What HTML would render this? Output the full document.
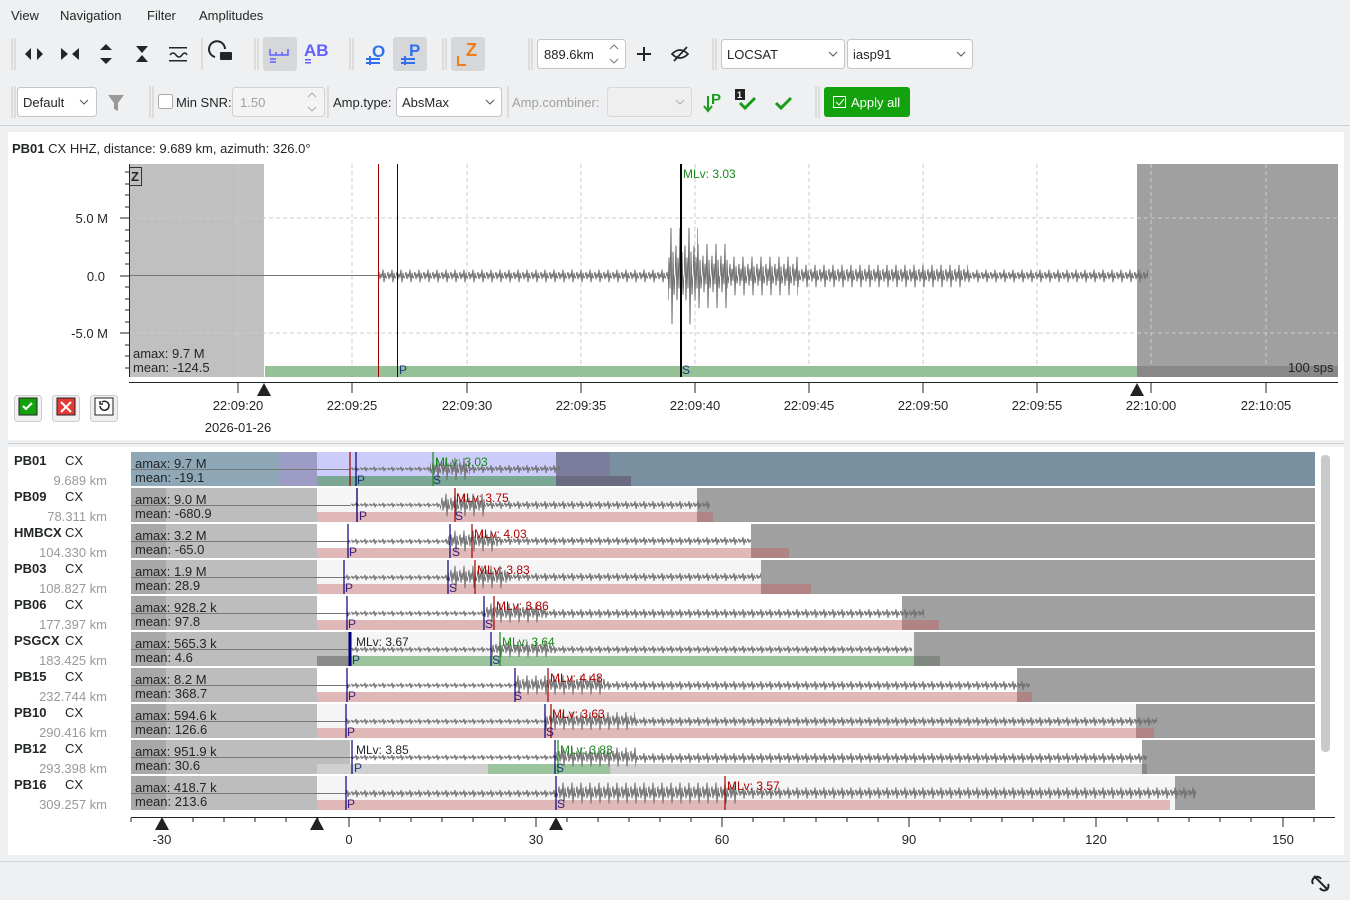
<!DOCTYPE html>
<html><head><meta charset="utf-8"><style>
html,body{margin:0;padding:0;width:1350px;height:900px;overflow:hidden;background:#eff0f1;font-family:"Liberation Sans","DejaVu Sans",sans-serif}
svg{display:block}
text{font-family:"Liberation Sans","DejaVu Sans",sans-serif;font-size:13px;fill:#232627}
.s{font-size:12px}
</style></head><body>
<svg width="1350" height="900" viewBox="0 0 1350 900" xmlns="http://www.w3.org/2000/svg">
<defs>
<pattern id="z" width="9" height="20" patternUnits="userSpaceOnUse">
<path d="M0 10 L1 5 L2 14 L3 7 L4 12 L5 2 L6 18 L7 6 L8 13 L9 10" stroke="#707070" stroke-width="1" fill="none" vector-effect="non-scaling-stroke"/>
</pattern>
</defs>
<!-- menu -->
<text x="11" y="20">View</text><text x="60" y="20">Navigation</text><text x="147" y="20">Filter</text><text x="199" y="20">Amplitudes</text>
<!-- toolbar row1 -->
<g fill="#232627">
<path d="M25 54 l6 -6 v12z M43 54 l-6 -6 v12z"/>
<path d="M61 48 l7 6 l-7 6z M79 48 l-7 6 l7 6z"/>
<path d="M106 44 l-6 6 h12z M106 64 l-6 -6 h12z"/>
<path d="M136 46 h12 l-6 7z M136 62 h12 l-6 -7z"/>
<rect x="169" y="47" width="18" height="1.5"/><rect x="169" y="60" width="18" height="1.5"/>
<path d="M170 55 q3 -4 6 0 t6 0 t5 0" stroke="#232627" fill="none" stroke-width="1.5"/>
<path d="M215 57 a8 8 0 1 1 10 -8" stroke="#232627" fill="none" stroke-width="2"/><rect x="220" y="52" width="12" height="8" rx="1"/>
</g>
<rect x="263" y="37" width="34" height="34" rx="3" fill="#d6d7d9"/>
<path d="M270 49 v6 h18 v-6 M276 52v3 M282 52v3 M270 59h6 M270 62h6" stroke="#6060ff" fill="none" stroke-width="1.5"/>
<text x="304" y="56" style="font-size:17px;font-weight:bold;fill:#6060ff">AB</text>
<rect x="305" y="59" width="6" height="1.5" fill="#6060ff"/><rect x="305" y="62" width="6" height="1.5" fill="#6060ff"/>
<text x="372" y="57" style="font-size:17px;font-weight:bold;fill:#3070f0">O</text>
<path d="M366 59h14 M366 63h14 M370 56v9" stroke="#3070f0" stroke-width="2"/>
<rect x="393" y="37" width="34" height="34" rx="3" fill="#d6d7d9"/>
<text x="409" y="56" style="font-size:17px;font-weight:bold;fill:#3070f0">P</text>
<path d="M401 59h14 M401 63h14 M405 56v9" stroke="#3070f0" stroke-width="2"/>
<rect x="451" y="37" width="34" height="34" rx="3" fill="#d6d7d9"/>
<text x="466" y="56" style="font-size:18px;font-weight:bold;fill:#f47a12">Z</text>
<path d="M458 56v9h8" stroke="#f47a12" stroke-width="2" fill="none"/>
<g stroke="#c8c8c8"><path d="M12 38v32 M15 38v32 M202 38v32 M255 38v32 M258 38v32 M350 38v32 M353 38v32 M443 38v32 M446 38v32 M529 38v32 M532 38v32 M713 38v32 M716 38v32 M12 86v32 M15 86v32 M150 86v32 M153 86v32 M328 86v32 M508 86v32 M816 86v32 M819 86v32"/></g>
<rect x="537.5" y="39.5" width="88" height="29" rx="3" fill="#fff" stroke="#c4c6c9"/>
<text x="544" y="59">889.6km</text>
<path d="M610 49l4-4 4 4 M610 59l4 4 4-4" stroke="#777" fill="none"/>
<path d="M644 47v14 M637 54h14" stroke="#232627" stroke-width="2"/>
<path d="M672 54 q8 -8 16 0 q-8 8 -16 0z M674 61 l13 -14" stroke="#232627" stroke-width="1.7" fill="none"/>
<rect x="721.5" y="39.5" width="123" height="29" rx="3" fill="#fff" stroke="#c4c6c9"/>
<text x="727" y="59">LOCSAT</text><path d="M829 52l4 4 4-4" stroke="#555" fill="none"/>
<rect x="847.5" y="39.5" width="125" height="29" rx="3" fill="#fff" stroke="#c4c6c9"/>
<text x="853" y="59">iasp91</text><path d="M957 52l4 4 4-4" stroke="#555" fill="none"/>
<!-- row2 -->
<rect x="17.5" y="87.5" width="79" height="29" rx="3" fill="#fff" stroke="#c4c6c9"/>
<text x="23" y="107">Default</text><path d="M80 100l4 4 4-4" stroke="#555" fill="none"/>
<path d="M108 95h16l-6 8v8l-4-2v-6z" fill="#999"/>
<rect x="158.5" y="94.5" width="14" height="14" rx="2" fill="#fff" stroke="#aaa"/>
<text x="176" y="107">Min SNR:</text>
<rect x="232.5" y="87.5" width="92" height="29" rx="3" fill="#f4f4f5" stroke="#d0d2d4"/>
<text x="240" y="107" style="fill:#a0a0a0">1.50</text>
<path d="M308 97l4-4 4 4 M308 107l4 4 4-4" stroke="#aaa" fill="none"/>
<text x="333" y="107">Amp.type:</text>
<rect x="396.5" y="87.5" width="105" height="29" rx="3" fill="#fff" stroke="#c4c6c9"/>
<text x="402" y="107">AbsMax</text><path d="M486 100l4 4 4-4" stroke="#555" fill="none"/>
<text x="512" y="107" style="fill:#a0a0a0">Amp.combiner:</text>
<rect x="607.5" y="87.5" width="84" height="29" rx="3" fill="#efeff0" stroke="#d6d8da"/>
<path d="M676 100l4 4 4-4" stroke="#aaa" fill="none"/>
<path d="M708 96v14 M704 106l4 5 4-5" stroke="#1a9c1a" stroke-width="2" fill="none"/>
<text x="711" y="104" style="font-size:15px;font-weight:bold;fill:#1a9c1a">P</text>
<rect x="735" y="89" width="10" height="11" fill="#222"/><text x="737" y="98" style="font-size:9px;fill:#fff;font-weight:bold">1</text>
<path d="M740 103l5 5 10-10 M776 103l5 5 10-10" stroke="#1a9c1a" stroke-width="3" fill="none"/>
<rect x="824" y="87" width="86" height="30" rx="3" fill="#13a10e"/>
<rect x="833.5" y="96.5" width="12" height="11" fill="none" stroke="#fff"/><path d="M836 102l3 3 5-6" stroke="#fff" fill="none"/>
<text x="851" y="107" style="fill:#fff">Apply all</text>
<line x1="0" y1="125.5" x2="1350" y2="125.5" stroke="#cfd0d2"/>
<!-- top panel -->
<rect x="8" y="132" width="1336" height="308" fill="#fff"/>
<text x="12" y="153"><tspan font-weight="bold">PB01</tspan>  CX  HHZ, distance: 9.689 km, azimuth: 326.0°</text>
<rect x="129" y="164" width="135" height="213" fill="#c0c0c0"/>
<rect x="1137" y="164" width="201" height="213" fill="#a0a0a0"/>
<g stroke="#ccc" stroke-dasharray="4,3"><path d="M129 218H1338 M129 333H1338 M238 164V377 M352 164V377 M467 164V377 M581 164V377 M695 164V377 M809 164V377 M923 164V377 M1037 164V377 M1151 164V377 M1266 164V377"/></g>
<rect x="265" y="366" width="872" height="11" fill="#96c096"/>
<rect x="1137" y="366" width="201" height="11" fill="#888"/>
<line x1="129" y1="275.5" x2="378" y2="275.5" stroke="#777"/>
<g transform="translate(0,268) scale(1,0.8)"><rect x="378" y="0" width="290" height="20" fill="url(#z)"/></g>
<g transform="translate(0,216) scale(1,6)"><rect x="668" y="0" width="30" height="20" fill="url(#z)"/></g>
<g transform="translate(0,236) scale(1,4)"><rect x="698" y="0" width="30" height="20" fill="url(#z)"/></g>
<g transform="translate(0,252) scale(1,2.4)"><rect x="728" y="0" width="70" height="20" fill="url(#z)"/></g>
<g transform="translate(0,262) scale(1,1.4)"><rect x="798" y="0" width="170" height="20" fill="url(#z)"/></g>
<g transform="translate(0,268) scale(1,0.8)"><rect x="968" y="0" width="180" height="20" fill="url(#z)"/></g>
<line x1="378.5" y1="164" x2="378.5" y2="377" stroke="#a00000"/>
<line x1="397.5" y1="164" x2="397.5" y2="377" stroke="#000080"/>
<line x1="681" y1="164" x2="681" y2="377" stroke="#000" stroke-width="2"/>
<text x="399" y="374" class="s" style="fill:#1a3a7a">P</text><text x="682" y="374" class="s" style="fill:#1a3a7a">S</text>
<text x="683" y="178" class="s" style="fill:#1a8a1a">MLv: 3.03</text>
<rect x="129.5" y="167.5" width="12" height="18" fill="none" stroke="#333"/><text x="131" y="181" style="font-weight:bold">Z</text>
<text x="133" y="358">amax: 9.7 M</text><text x="133" y="372">mean: -124.5</text>
<text x="1288" y="372">100 sps</text>
<line x1="129.5" y1="164" x2="129.5" y2="377" stroke="#232627"/>
<g stroke="#232627"><path d="M120 218h9 M120 276h9 M120 333h9 M125 172h4 M125 184h4 M125 195h4 M125 207h4 M125 230h4 M125 241h4 M125 253h4 M125 264h4 M125 287h4 M125 299h4 M125 310h4 M125 322h4 M125 345h4 M125 356h4 M125 368h4"/></g>
<text x="108" y="223" text-anchor="end">5.0 M</text><text x="105" y="281" text-anchor="end">0.0</text><text x="108" y="338" text-anchor="end">-5.0 M</text>
<line x1="129" y1="382.5" x2="1338" y2="382.5" stroke="#232627"/>
<g stroke="#232627"><path d="M238 383v10 M352 383v10 M467 383v10 M581 383v10 M695 383v10 M809 383v10 M923 383v10 M1037 383v10 M1151 383v10 M1266 383v10"/></g>
<g text-anchor="middle"><text x="238" y="410">22:09:20</text><text x="352" y="410">22:09:25</text><text x="467" y="410">22:09:30</text><text x="581" y="410">22:09:35</text><text x="695" y="410">22:09:40</text><text x="809" y="410">22:09:45</text><text x="923" y="410">22:09:50</text><text x="1037" y="410">22:09:55</text><text x="1151" y="410">22:10:00</text><text x="1266" y="410">22:10:05</text><text x="238" y="432">2026-01-26</text></g>
<path d="M264 383l-7 13h14z M1137 383l-7 13h14z" fill="#222"/>
<rect x="14.5" y="395.5" width="27" height="26" rx="3" fill="#f0f0f0" stroke="#ccc"/><rect x="19" y="398" width="18" height="17" fill="#13a10e" stroke="#222"/><path d="M23 406l3 3 6-6" stroke="#fff" stroke-width="2" fill="none"/>
<rect x="52.5" y="395.5" width="27" height="26" rx="3" fill="#f0f0f0" stroke="#ccc"/><rect x="57" y="398" width="18" height="17" fill="#e53935" stroke="#222"/><path d="M61 402l10 10 M71 402l-10 10" stroke="#fff" stroke-width="2"/>
<rect x="90.5" y="395.5" width="27" height="26" rx="3" fill="#f0f0f0" stroke="#ccc"/><rect x="95" y="398" width="18" height="17" fill="#fff" stroke="#222"/><path d="M100 406a4.5 4.5 0 1 0 2-4 M100 401v3h3" stroke="#222" stroke-width="1.5" fill="none"/>
<line x1="8" y1="443.5" x2="1344" y2="443.5" stroke="#cfd0d2"/>
<!-- bottom panel -->
<rect x="8" y="447" width="1336" height="408" fill="#fff"/>
<g>
<rect x="131" y="452" width="149" height="34" fill="#8fa8b8"/><rect x="280" y="452" width="37" height="34" fill="#9c9cc4"/><rect x="317" y="452" width="239" height="34" fill="#ccccfa"/><rect x="556" y="452" width="54" height="34" fill="#7c7c9c"/><rect x="610" y="452" width="705" height="34" fill="#7890a0"/>
<rect x="317" y="476" width="239" height="10" fill="#7aa894"/><rect x="556" y="476" width="75" height="10" fill="#6a6a80"/>
</g>
<g id="rows">
<rect x="131" y="488" width="186" height="34" fill="#bdbdbd"/><rect x="131" y="488" width="35" height="34" fill="#a8a8a8"/><rect x="317" y="488" width="380" height="34" fill="#f5f5f5"/><rect x="697" y="488" width="618" height="34" fill="#a0a0a0"/><rect x="317" y="512" width="380" height="10" fill="#e0b8b8"/><rect x="697" y="512" width="16" height="10" fill="#b08484"/>
<rect x="131" y="524" width="186" height="34" fill="#bdbdbd"/><rect x="131" y="524" width="35" height="34" fill="#a8a8a8"/><rect x="317" y="524" width="434" height="34" fill="#fff"/><rect x="751" y="524" width="564" height="34" fill="#a0a0a0"/><rect x="317" y="548" width="434" height="10" fill="#e0b8b8"/><rect x="751" y="548" width="38" height="10" fill="#b08484"/>
<rect x="131" y="560" width="186" height="34" fill="#bdbdbd"/><rect x="131" y="560" width="35" height="34" fill="#a8a8a8"/><rect x="317" y="560" width="444" height="34" fill="#f5f5f5"/><rect x="761" y="560" width="554" height="34" fill="#a0a0a0"/><rect x="317" y="584" width="444" height="10" fill="#e0b8b8"/><rect x="761" y="584" width="50" height="10" fill="#b08484"/>
<rect x="131" y="596" width="186" height="34" fill="#bdbdbd"/><rect x="131" y="596" width="35" height="34" fill="#a8a8a8"/><rect x="317" y="596" width="585" height="34" fill="#fff"/><rect x="902" y="596" width="413" height="34" fill="#a0a0a0"/><rect x="317" y="620" width="585" height="10" fill="#e0b8b8"/><rect x="902" y="620" width="37" height="10" fill="#b08484"/>
<rect x="131" y="632" width="219" height="34" fill="#bdbdbd"/><rect x="131" y="632" width="35" height="34" fill="#a8a8a8"/><rect x="350" y="632" width="564" height="34" fill="#f5f5f5"/><rect x="914" y="632" width="401" height="34" fill="#a0a0a0"/><rect x="317" y="656" width="33" height="10" fill="#8a8a8a"/><rect x="350" y="656" width="564" height="10" fill="#9cc49c"/><rect x="914" y="656" width="26" height="10" fill="#808880"/>
<rect x="131" y="668" width="186" height="34" fill="#bdbdbd"/><rect x="131" y="668" width="35" height="34" fill="#a8a8a8"/><rect x="317" y="668" width="700" height="34" fill="#fff"/><rect x="1017" y="668" width="298" height="34" fill="#a0a0a0"/><rect x="317" y="692" width="700" height="10" fill="#e0b8b8"/><rect x="1017" y="692" width="15" height="10" fill="#b08484"/>
<rect x="131" y="704" width="186" height="34" fill="#bdbdbd"/><rect x="131" y="704" width="35" height="34" fill="#a8a8a8"/><rect x="317" y="704" width="819" height="34" fill="#f5f5f5"/><rect x="1136" y="704" width="179" height="34" fill="#a0a0a0"/><rect x="317" y="728" width="819" height="10" fill="#e0b8b8"/><rect x="1136" y="728" width="18" height="10" fill="#b08484"/>
<rect x="131" y="740" width="219" height="34" fill="#bdbdbd"/><rect x="131" y="740" width="35" height="34" fill="#a8a8a8"/><rect x="350" y="740" width="792" height="34" fill="#fff"/><rect x="1142" y="740" width="173" height="34" fill="#a0a0a0"/><rect x="317" y="764" width="171" height="10" fill="#d0d0d0"/><rect x="488" y="764" width="122" height="10" fill="#9cc49c"/><rect x="610" y="764" width="532" height="10" fill="#d0d0d0"/><rect x="1142" y="764" width="5" height="10" fill="#888"/>
<rect x="131" y="776" width="186" height="34" fill="#bdbdbd"/><rect x="131" y="776" width="35" height="34" fill="#a8a8a8"/><rect x="317" y="776" width="858" height="34" fill="#f5f5f5"/><rect x="1175" y="776" width="140" height="34" fill="#a0a0a0"/><rect x="317" y="800" width="853" height="10" fill="#e0b8b8"/>
</g>
<g stroke="#777">
<path d="M131 469.5H350 M131 505.5H350 M131 541.5H348 M131 577.5H344 M131 613.5H347 M131 649.5H350 M131 685.5H347 M131 721.5H346 M131 757.5H352 M131 793.5H346"/>
</g>
<g>
<g transform="translate(0,466) scale(1,0.3)"><rect x="350" y="0" width="80" height="20" fill="url(#z)"/></g>
<g transform="translate(0,455) scale(1,1.4)"><rect x="430" y="0" width="40" height="20" fill="url(#z)"/></g>
<g transform="translate(0,464) scale(1,0.5)"><rect x="470" y="0" width="90" height="20" fill="url(#z)"/></g>
<g transform="translate(0,502) scale(1,0.3)"><rect x="350" y="0" width="90" height="20" fill="url(#z)"/></g>
<g transform="translate(0,491) scale(1,1.4)"><rect x="440" y="0" width="45" height="20" fill="url(#z)"/></g>
<g transform="translate(0,500) scale(1,0.5)"><rect x="485" y="0" width="225" height="20" fill="url(#z)"/></g>
<g transform="translate(0,538) scale(1,0.35)"><rect x="348" y="0" width="100" height="20" fill="url(#z)"/></g>
<g transform="translate(0,528) scale(1,1.3)"><rect x="448" y="0" width="50" height="20" fill="url(#z)"/></g>
<g transform="translate(0,536) scale(1,0.5)"><rect x="498" y="0" width="253" height="20" fill="url(#z)"/></g>
<g transform="translate(0,574) scale(1,0.35)"><rect x="344" y="0" width="104" height="20" fill="url(#z)"/></g>
<g transform="translate(0,563) scale(1,1.4)"><rect x="448" y="0" width="60" height="20" fill="url(#z)"/></g>
<g transform="translate(0,572) scale(1,0.5)"><rect x="508" y="0" width="253" height="20" fill="url(#z)"/></g>
<g transform="translate(0,610) scale(1,0.35)"><rect x="347" y="0" width="137" height="20" fill="url(#z)"/></g>
<g transform="translate(0,601) scale(1,1.2)"><rect x="484" y="0" width="60" height="20" fill="url(#z)"/></g>
<g transform="translate(0,608) scale(1,0.55)"><rect x="544" y="0" width="380" height="20" fill="url(#z)"/></g>
<g transform="translate(0,646) scale(1,0.35)"><rect x="350" y="0" width="142" height="20" fill="url(#z)"/></g>
<g transform="translate(0,639) scale(1,1)"><rect x="492" y="0" width="60" height="20" fill="url(#z)"/></g>
<g transform="translate(0,645) scale(1,0.45)"><rect x="552" y="0" width="360" height="20" fill="url(#z)"/></g>
<g transform="translate(0,682) scale(1,0.35)"><rect x="347" y="0" width="168" height="20" fill="url(#z)"/></g>
<g transform="translate(0,673) scale(1,1.2)"><rect x="515" y="0" width="90" height="20" fill="url(#z)"/></g>
<g transform="translate(0,680) scale(1,0.55)"><rect x="605" y="0" width="425" height="20" fill="url(#z)"/></g>
<g transform="translate(0,718) scale(1,0.35)"><rect x="346" y="0" width="199" height="20" fill="url(#z)"/></g>
<g transform="translate(0,710) scale(1,1.1)"><rect x="545" y="0" width="90" height="20" fill="url(#z)"/></g>
<g transform="translate(0,716) scale(1,0.55)"><rect x="635" y="0" width="522" height="20" fill="url(#z)"/></g>
<g transform="translate(0,754) scale(1,0.35)"><rect x="352" y="0" width="204" height="20" fill="url(#z)"/></g>
<g transform="translate(0,745) scale(1,1.2)"><rect x="556" y="0" width="80" height="20" fill="url(#z)"/></g>
<g transform="translate(0,752) scale(1,0.6)"><rect x="636" y="0" width="511" height="20" fill="url(#z)"/></g>
<g transform="translate(0,789) scale(1,0.45)"><rect x="346" y="0" width="210" height="20" fill="url(#z)"/></g>
<g transform="translate(0,780) scale(1,1.3)"><rect x="556" y="0" width="180" height="20" fill="url(#z)"/></g>
<g transform="translate(0,786) scale(1,0.7)"><rect x="736" y="0" width="460" height="20" fill="url(#z)"/></g>
</g>
<g stroke-width="1.2">
<path d="M350 452v34 M357 488v34 M472 524v34 M475 560v34 M494 596v34 M548 668v34 M551 704v34 M725 776v34 M455 488v34" stroke="#a00000"/>
<path d="M356 452v34 M357 488v34 M348 524v34 M450 524v34 M344 560v34 M448 560v34 M347 596v34 M484 596v34 M491 632v34 M347 668v34 M515 668v34 M346 704v34 M545 704v34 M352 740v34 M555 740v34 M346 776v34 M556 776v34" stroke="#000080"/>
<path d="M350 632v34" stroke="#000080" stroke-width="3"/>
<path d="M433 452v34 M500 632v34 M558 740v34" stroke="#1a8a1a"/>
</g>
<g>
<text x="357" y="484" style="fill:#1a3a7a;font-size:12px">P</text><text x="433" y="484" style="fill:#1a3a7a;font-size:12px">S</text>
<text x="435" y="466" style="fill:#1a8a1a;font-size:12px">MLv: 3.03</text>
<text x="359" y="520" style="fill:#3a1a7a;font-size:12px">P</text><text x="455" y="520" style="fill:#3a1a7a;font-size:12px">S</text><text x="456" y="502" style="fill:#b00000;font-size:12px">MLv: 3.75</text>
<text x="349" y="556" style="fill:#3a1a7a;font-size:12px">P</text><text x="452" y="556" style="fill:#3a1a7a;font-size:12px">S</text><text x="474" y="538" style="fill:#b00000;font-size:12px">MLv: 4.03</text>
<text x="345" y="592" style="fill:#3a1a7a;font-size:12px">P</text><text x="449" y="592" style="fill:#3a1a7a;font-size:12px">S</text><text x="477" y="574" style="fill:#b00000;font-size:12px">MLv: 3.83</text>
<text x="348" y="628" style="fill:#3a1a7a;font-size:12px">P</text><text x="485" y="628" style="fill:#3a1a7a;font-size:12px">S</text><text x="496" y="610" style="fill:#b00000;font-size:12px">MLv: 3.86</text>
<text x="352" y="664" style="fill:#1a3a7a;font-size:12px">P</text><text x="492" y="664" style="fill:#1a3a7a;font-size:12px">S</text><text x="356" y="646" style="font-size:12px">MLv: 3.67</text><text x="502" y="646" style="fill:#1a8a1a;font-size:12px">MLv: 3.64</text>
<text x="348" y="700" style="fill:#3a1a7a;font-size:12px">P</text><text x="514" y="700" style="fill:#3a1a7a;font-size:12px">S</text><text x="550" y="682" style="fill:#b00000;font-size:12px">MLv: 4.48</text>
<text x="347" y="736" style="fill:#3a1a7a;font-size:12px">P</text><text x="546" y="736" style="fill:#3a1a7a;font-size:12px">S</text><text x="552" y="718" style="fill:#b00000;font-size:12px">MLv: 3.63</text>
<text x="354" y="772" style="fill:#1a3a7a;font-size:12px">P</text><text x="556" y="772" style="fill:#1a3a7a;font-size:12px">S</text><text x="356" y="754" style="font-size:12px">MLv: 3.85</text><text x="560" y="754" style="fill:#1a8a1a;font-size:12px">MLv: 3.83</text>
<text x="347" y="808" style="fill:#3a1a7a;font-size:12px">P</text><text x="557" y="808" style="fill:#3a1a7a;font-size:12px">S</text><text x="727" y="790" style="fill:#b00000;font-size:12px">MLv: 3.57</text>
</g>
<g>
<text x="135" y="468">amax: 9.7 M</text><text x="135" y="482">mean: -19.1</text>
<text x="135" y="504">amax: 9.0 M</text><text x="135" y="518">mean: -680.9</text>
<text x="135" y="540">amax: 3.2 M</text><text x="135" y="554">mean: -65.0</text>
<text x="135" y="576">amax: 1.9 M</text><text x="135" y="590">mean: 28.9</text>
<text x="135" y="612">amax: 928.2 k</text><text x="135" y="626">mean: 97.8</text>
<text x="135" y="648">amax: 565.3 k</text><text x="135" y="662">mean: 4.6</text>
<text x="135" y="684">amax: 8.2 M</text><text x="135" y="698">mean: 368.7</text>
<text x="135" y="720">amax: 594.6 k</text><text x="135" y="734">mean: 126.6</text>
<text x="135" y="756">amax: 951.9 k</text><text x="135" y="770">mean: 30.6</text>
<text x="135" y="792">amax: 418.7 k</text><text x="135" y="806">mean: 213.6</text>
</g>
<g>
<text x="14" y="465" style="font-weight:bold">PB01</text><text x="65" y="465">CX</text><text x="107" y="485" text-anchor="end" style="fill:#999">9.689 km</text>
<text x="14" y="501" style="font-weight:bold">PB09</text><text x="65" y="501">CX</text><text x="107" y="521" text-anchor="end" style="fill:#999">78.311 km</text>
<text x="14" y="537" style="font-weight:bold">HMBCX</text><text x="65" y="537">CX</text><text x="107" y="557" text-anchor="end" style="fill:#999">104.330 km</text>
<text x="14" y="573" style="font-weight:bold">PB03</text><text x="65" y="573">CX</text><text x="107" y="593" text-anchor="end" style="fill:#999">108.827 km</text>
<text x="14" y="609" style="font-weight:bold">PB06</text><text x="65" y="609">CX</text><text x="107" y="629" text-anchor="end" style="fill:#999">177.397 km</text>
<text x="14" y="645" style="font-weight:bold">PSGCX</text><text x="65" y="645">CX</text><text x="107" y="665" text-anchor="end" style="fill:#999">183.425 km</text>
<text x="14" y="681" style="font-weight:bold">PB15</text><text x="65" y="681">CX</text><text x="107" y="701" text-anchor="end" style="fill:#999">232.744 km</text>
<text x="14" y="717" style="font-weight:bold">PB10</text><text x="65" y="717">CX</text><text x="107" y="737" text-anchor="end" style="fill:#999">290.416 km</text>
<text x="14" y="753" style="font-weight:bold">PB12</text><text x="65" y="753">CX</text><text x="107" y="773" text-anchor="end" style="fill:#999">293.398 km</text>
<text x="14" y="789" style="font-weight:bold">PB16</text><text x="65" y="789">CX</text><text x="107" y="809" text-anchor="end" style="fill:#999">309.257 km</text>
</g>
<rect x="1321" y="455" width="9" height="297" rx="4" fill="#c8c9cb"/>
<line x1="131" y1="817.5" x2="1335" y2="817.5" stroke="#232627"/>
<g stroke="#232627"><path d="M162 818v9 M349 818v9 M536 818v9 M722 818v9 M909 818v9 M1096 818v9 M1283 818v9 M193 818v4 M224 818v4 M255 818v4 M286 818v4 M318 818v4 M380 818v4 M411 818v4 M442 818v4 M473 818v4 M505 818v4 M567 818v4 M598 818v4 M629 818v4 M660 818v4 M691 818v4 M753 818v4 M784 818v4 M816 818v4 M847 818v4 M878 818v4 M940 818v4 M971 818v4 M1002 818v4 M1033 818v4 M1064 818v4 M1127 818v4 M1158 818v4 M1189 818v4 M1220 818v4 M1251 818v4 M1314 818v4 M131 818v4"/></g>
<path d="M162 817l-7 13h14z M317 817l-7 13h14z M556 817l-7 13h14z" fill="#222"/>
<g text-anchor="middle"><text x="162" y="844">-30</text><text x="349" y="844">0</text><text x="536" y="844">30</text><text x="722" y="844">60</text><text x="909" y="844">90</text><text x="1096" y="844">120</text><text x="1283" y="844">150</text></g>
<line x1="0" y1="861.5" x2="1350" y2="861.5" stroke="#d6d7d9"/>
<path d="M1314 876l14 14 M1313 884a4 4 0 0 1 8 -5 M1320 888a4 4 0 0 0 8 -4" stroke="#232627" stroke-width="2" fill="none"/>
</svg>
</body></html>
